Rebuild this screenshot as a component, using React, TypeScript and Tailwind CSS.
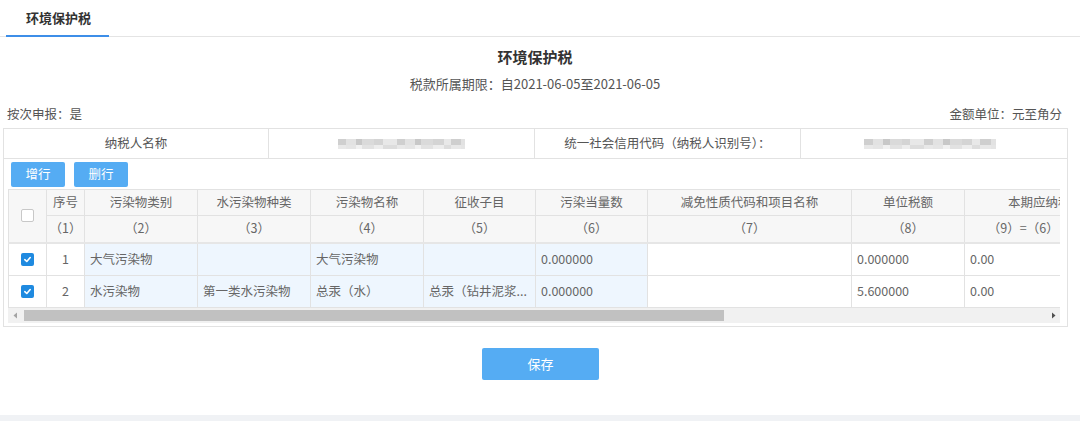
import React from "react";

const font = { fontFamily: '"Noto Sans CJK SC", "Noto Sans", sans-serif' };

function Blur({ widths }: { widths: number[] }) {
  const shades = ["bg-[#cfcfcf]", "bg-[#e2e2e2]", "bg-[#c8c8c8]", "bg-[#dadada]", "bg-[#d4d4d4]", "bg-[#e8e8e8]"];
  return (
    <div className="flex flex-col gap-0">
      <div className="flex h-[6px]">
        {widths.map((w, i) => (
          <div key={i} className={shades[i % shades.length]} style={{ width: w }} />
        ))}
      </div>
      <div className="flex h-[4px] opacity-60">
        {widths.map((w, i) => (
          <div key={i} className={shades[(i + 3) % shades.length]} style={{ width: w }} />
        ))}
      </div>
    </div>
  );
}

function Check({ checked }: { checked: boolean }) {
  if (!checked)
    return <div className="w-[13px] h-[13px] rounded-[2px] border border-[#c8c8c8] bg-white mx-auto" />;
  return (
    <div className="w-[13px] h-[13px] rounded-[2px] bg-[#1f8ae0] mx-auto flex items-center justify-center">
      <svg width="9" height="9" viewBox="0 0 10 10">
        <path d="M2 5.2 L4.2 7.2 L8 2.8" stroke="white" strokeWidth="1.8" fill="none" strokeLinecap="round" strokeLinejoin="round" />
      </svg>
    </div>
  );
}

const cols = [38, 38, 113, 113, 113, 112, 112, 204, 113, 162];

const headers = [
  "序号",
  "污染物类别",
  "水污染物种类",
  "污染物名称",
  "征收子目",
  "污染当量数",
  "减免性质代码和项目名称",
  "单位税额",
  "本期应纳税额",
];
const nums = [
  "（1）",
  "（2）",
  "（3）",
  "（4）",
  "（5）",
  "（6）",
  "（7）",
  "（8）",
  "（9）=（6）×（8）",
];

const rows = [
  ["1", "大气污染物", "", "大气污染物", "", "0.000000", "", "0.000000", "0.00"],
  ["2", "水污染物", "第一类水污染物", "总汞（水）", "总汞（钻井泥浆...", "0.000000", "", "5.600000", "0.00"],
];

export default function App() {
  return (
    <div className="w-[1080px] h-[421px] bg-white text-[#555] flex flex-col" style={font}>
      {/* tab bar */}
      <div className="h-[37px] border-b border-[#e4e4e4] flex items-stretch pl-[6px] shrink-0">
        <div className="w-[103px] flex items-center justify-center border-b-2 border-[#3d8ee8] -mb-px text-[13px] font-bold text-[#333] pl-[2px]">
          环境保护税
        </div>
      </div>

      <div className="mt-[10px] h-[20px] leading-[20px] text-center text-[15px] font-bold text-[#333] pr-[10px]">环境保护税</div>
      <div className="mt-[7px] h-[20px] leading-[20px] text-center text-[13px] text-[#555] pr-[10px]">
        税款所属期限：自2021-06-05至2021-06-05
      </div>
      <div className="mt-[10px] h-[20px] leading-[20px] flex justify-between px-[7px] text-[12.5px] text-[#555]">
        <span>按次申报：是</span>
        <span className="pr-[11px]">金额单位：元至角分</span>
      </div>

      {/* box */}
      <div className="mt-[4px] ml-[3px] w-[1065px] h-[199px] border border-[#e2e2e2] flex flex-col">
        <div className="h-[30px] border-b border-[#e2e2e2] flex text-[12.5px] text-[#555]">
          <div className="w-[265px] border-r border-[#e2e2e2] flex items-center justify-center">纳税人名称</div>
          <div className="w-[266px] border-r border-[#e2e2e2] flex items-center justify-center">
            <Blur widths={[8, 10, 6, 12, 9, 14, 8, 10, 6, 12, 11, 7, 10, 4]} />
          </div>
          <div className="w-[266px] border-r border-[#e2e2e2] flex items-center justify-center">统一社会信用代码（纳税人识别号）：</div>
          <div className="flex-1 flex items-center justify-center pr-[8px]">
            <Blur widths={[9, 10, 7, 12, 8, 14, 9, 10, 7, 12, 10, 8, 11, 5]} />
          </div>
        </div>
        <div className="h-[30px] flex items-center gap-[9px] pl-[7px]">
          <button className="w-[54px] h-[25px] bg-[#55acf3] text-white text-[12.5px] rounded-[2px]">增行</button>
          <button className="w-[54px] h-[25px] bg-[#55acf3] text-white text-[12.5px] rounded-[2px]">删行</button>
        </div>

        <div className="ml-[4px] w-[1052px] overflow-hidden flex flex-col">
          <div className="overflow-hidden w-[1052px]">
            <table className="table-fixed border-collapse text-[12.5px] text-[#666]" style={{ width: cols.reduce((a, b) => a + b, 0) }}>
              <colgroup>
                {cols.map((w, i) => (
                  <col key={i} style={{ width: w }} />
                ))}
              </colgroup>
              <thead>
                <tr className="h-[26px] bg-[#f7f7f7]">
                  <th rowSpan={2} className="border border-[#e2e2e2] font-normal">
                    <Check checked={false} />
                  </th>
                  {headers.map((h, i) => (
                    <th key={i} className="border border-[#e2e2e2] font-normal text-[#666] whitespace-nowrap overflow-hidden">
                      {h}
                    </th>
                  ))}
                </tr>
                <tr className="h-[27px] bg-[#f7f7f7]">
                  {nums.map((h, i) => (
                    <th key={i} className="border border-[#e2e2e2] font-normal text-[#666] whitespace-nowrap overflow-hidden">
                      {h}
                    </th>
                  ))}
                </tr>
              </thead>
              <tbody>
                {rows.map((r, ri) => (
                  <tr key={ri} className={ri === 0 ? "h-[33px] border-t-2 border-[#e6e6e6]" : "h-[32px]"}>
                    <td className="border border-[#e2e2e2] bg-white">
                      <Check checked />
                    </td>
                    {r.map((c, ci) => (
                      <td
                        key={ci}
                        className={
                          "border border-[#e2e2e2] whitespace-nowrap overflow-hidden " +
                          (ci === 0 ? "text-center bg-white" : "pl-[5px] ") +
                          (ci >= 1 && ci <= 5 ? "bg-[#eef6fe]" : ci > 0 ? "bg-white" : "")
                        }
                      >
                        {c}
                      </td>
                    ))}
                  </tr>
                ))}
              </tbody>
            </table>
          </div>
          {/* scrollbar */}
          <div className="h-[15px] bg-[#f1f1f1] flex items-center">
            <div className="w-[14px] h-full flex items-center justify-center">
              <svg width="5" height="7" viewBox="0 0 5 7">
                <path d="M4 0.5 L0.5 3.5 L4 6.5 Z" fill="#a3a3a3" />
              </svg>
            </div>
            <div className="w-[700px] h-[11px] bg-[#c1c1c1] ml-[2px]" />
            <div className="flex-1" />
            <div className="w-[14px] h-full flex items-center justify-center">
              <svg width="5" height="7" viewBox="0 0 5 7">
                <path d="M1 0.5 L4.5 3.5 L1 6.5 Z" fill="#505050" />
              </svg>
            </div>
          </div>
        </div>
      </div>

      <div className="flex justify-center mt-[21px]">
        <button className="w-[117px] h-[32px] bg-[#55acf3] text-white text-[13px] rounded-[2px] ml-[1px]">保存</button>
      </div>
      <div className="flex-1" />
      <div className="h-[6px] bg-[#f0f2f5]" />
    </div>
  );
}
